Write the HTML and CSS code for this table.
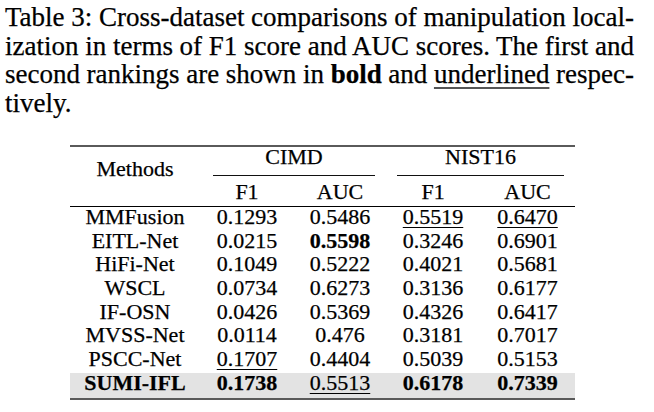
FILE: index.html
```html
<!DOCTYPE html>
<html lang="en">
<head>
<meta charset="utf-8">
<title>Table 3</title>
<link rel="stylesheet" href="styles.css">
</head>
<body>
<div class="page">
  <div class="caption">
    <div class="line">Table 3: Cross-dataset comparisons of manipulation local-</div>
    <div class="line">ization in terms of F1 score and AUC scores. The first and</div>
    <div class="line">second rankings are shown in <b>bold</b> and <span class="ul">underlined</span> respec-</div>
    <div class="line last">tively.</div>
  </div>
  <table class="results">
    <colgroup>
      <col class="c-method"><col class="c-a"><col class="c-b"><col class="c-c"><col class="c-d">
    </colgroup>
    <thead>
      <tr class="group-row">
        <th rowspan="2" class="method-head">Methods</th>
        <th colspan="2"><div class="group group-cimd">CIMD</div></th>
        <th colspan="2"><div class="group group-nist">NIST16</div></th>
      </tr>
      <tr class="metric-row">
        <th>F1</th><th>AUC</th><th>F1</th><th>AUC</th>
      </tr>
    </thead>
    <tbody>
      <tr><td>MMFusion</td><td>0.1293</td><td>0.5486</td><td><span class="second pad">0.5519</span></td><td><span class="second">0.6470</span></td></tr>
      <tr><td>EITL-Net</td><td>0.0215</td><td><b>0.5598</b></td><td>0.3246</td><td>0.6901</td></tr>
      <tr><td>HiFi-Net</td><td>0.1049</td><td>0.5222</td><td>0.4021</td><td>0.5681</td></tr>
      <tr><td>WSCL</td><td>0.0734</td><td>0.6273</td><td>0.3136</td><td>0.6177</td></tr>
      <tr><td>IF-OSN</td><td>0.0426</td><td>0.5369</td><td>0.4326</td><td>0.6417</td></tr>
      <tr><td>MVSS-Net</td><td>0.0114</td><td>0.476</td><td>0.3181</td><td>0.7017</td></tr>
      <tr><td>PSCC-Net</td><td><span class="second pad">0.1707</span></td><td>0.4404</td><td>0.5039</td><td>0.5153</td></tr>
      <tr class="ours"><td><b>SUMI-IFL</b></td><td><b>0.1738</b></td><td><span class="second">0.5513</span></td><td><b>0.6178</b></td><td><b>0.7339</b></td></tr>
    </tbody>
  </table>
</div>
</body>
</html>
```

FILE: styles.css
```css
html, body {
  margin: 0;
  padding: 0;
  background: #ffffff;
}

body {
  font-family: "Liberation Serif", "Times New Roman", serif;
  color: #000000;
  -webkit-text-stroke: 0.25px #000000;
}

.page {
  width: 654px;
  height: 412px;
  overflow: hidden;
}

.caption {
  width: 629px;
  padding: 3px 0 0 5px;
  font-size: 27px;
  line-height: 28.7px;
  word-spacing: -1.5px;
}

.caption .line {
  text-align: justify;
  text-align-last: justify;
  white-space: nowrap;
}

.caption .line.last {
  text-align-last: left;
}

.caption b {
  font-weight: bold;
}

.caption .ul {
  text-decoration: underline;
  text-decoration-color: #555555;
  text-decoration-thickness: 1.5px;
  text-underline-offset: 4px;
}

.results {
  margin: 27px 0 0 70px;
  width: 505px;
  table-layout: fixed;
  border-collapse: collapse;
  border-top: 2px solid #5a5a5a;
  border-bottom: 2px solid #5a5a5a;
  font-size: 22px;
}

.c-method { width: 130px; }
.c-a { width: 94px; }
.c-b { width: 92px; }
.c-c { width: 94px; }
.c-d { width: 95px; }

.results th,
.results td {
  padding: 0;
  text-align: center;
  font-weight: normal;
  white-space: nowrap;
}

.group-row th {
  vertical-align: top;
}

.method-head {
  padding-top: 10px !important;
  line-height: 24px;
}

.group {
  line-height: 20px;
  padding-bottom: 8px;
  border-bottom: 1px solid #111111;
}

.group-cimd {
  margin: 0 11px 0 13px;
}

.group-nist {
  margin: 0 11px 0 11px;
}

.metric-row {
  border-bottom: 1px solid #000000;
}

.metric-row th {
  padding: 4px 0 2px 0;
  line-height: 24px;
}

.results tbody td {
  line-height: 20px;
  padding-bottom: 3.7px;
}

.results tbody tr.ours td {
  background: #e3e3e3;
  padding-bottom: 5px;
}

.results b {
  font-weight: bold;
}

.second {
  text-decoration: underline;
  text-decoration-thickness: 1px;
  text-underline-offset: 3px;
}

.second.pad {
  padding-left: 4px;
  margin-left: -4px;
}
```
